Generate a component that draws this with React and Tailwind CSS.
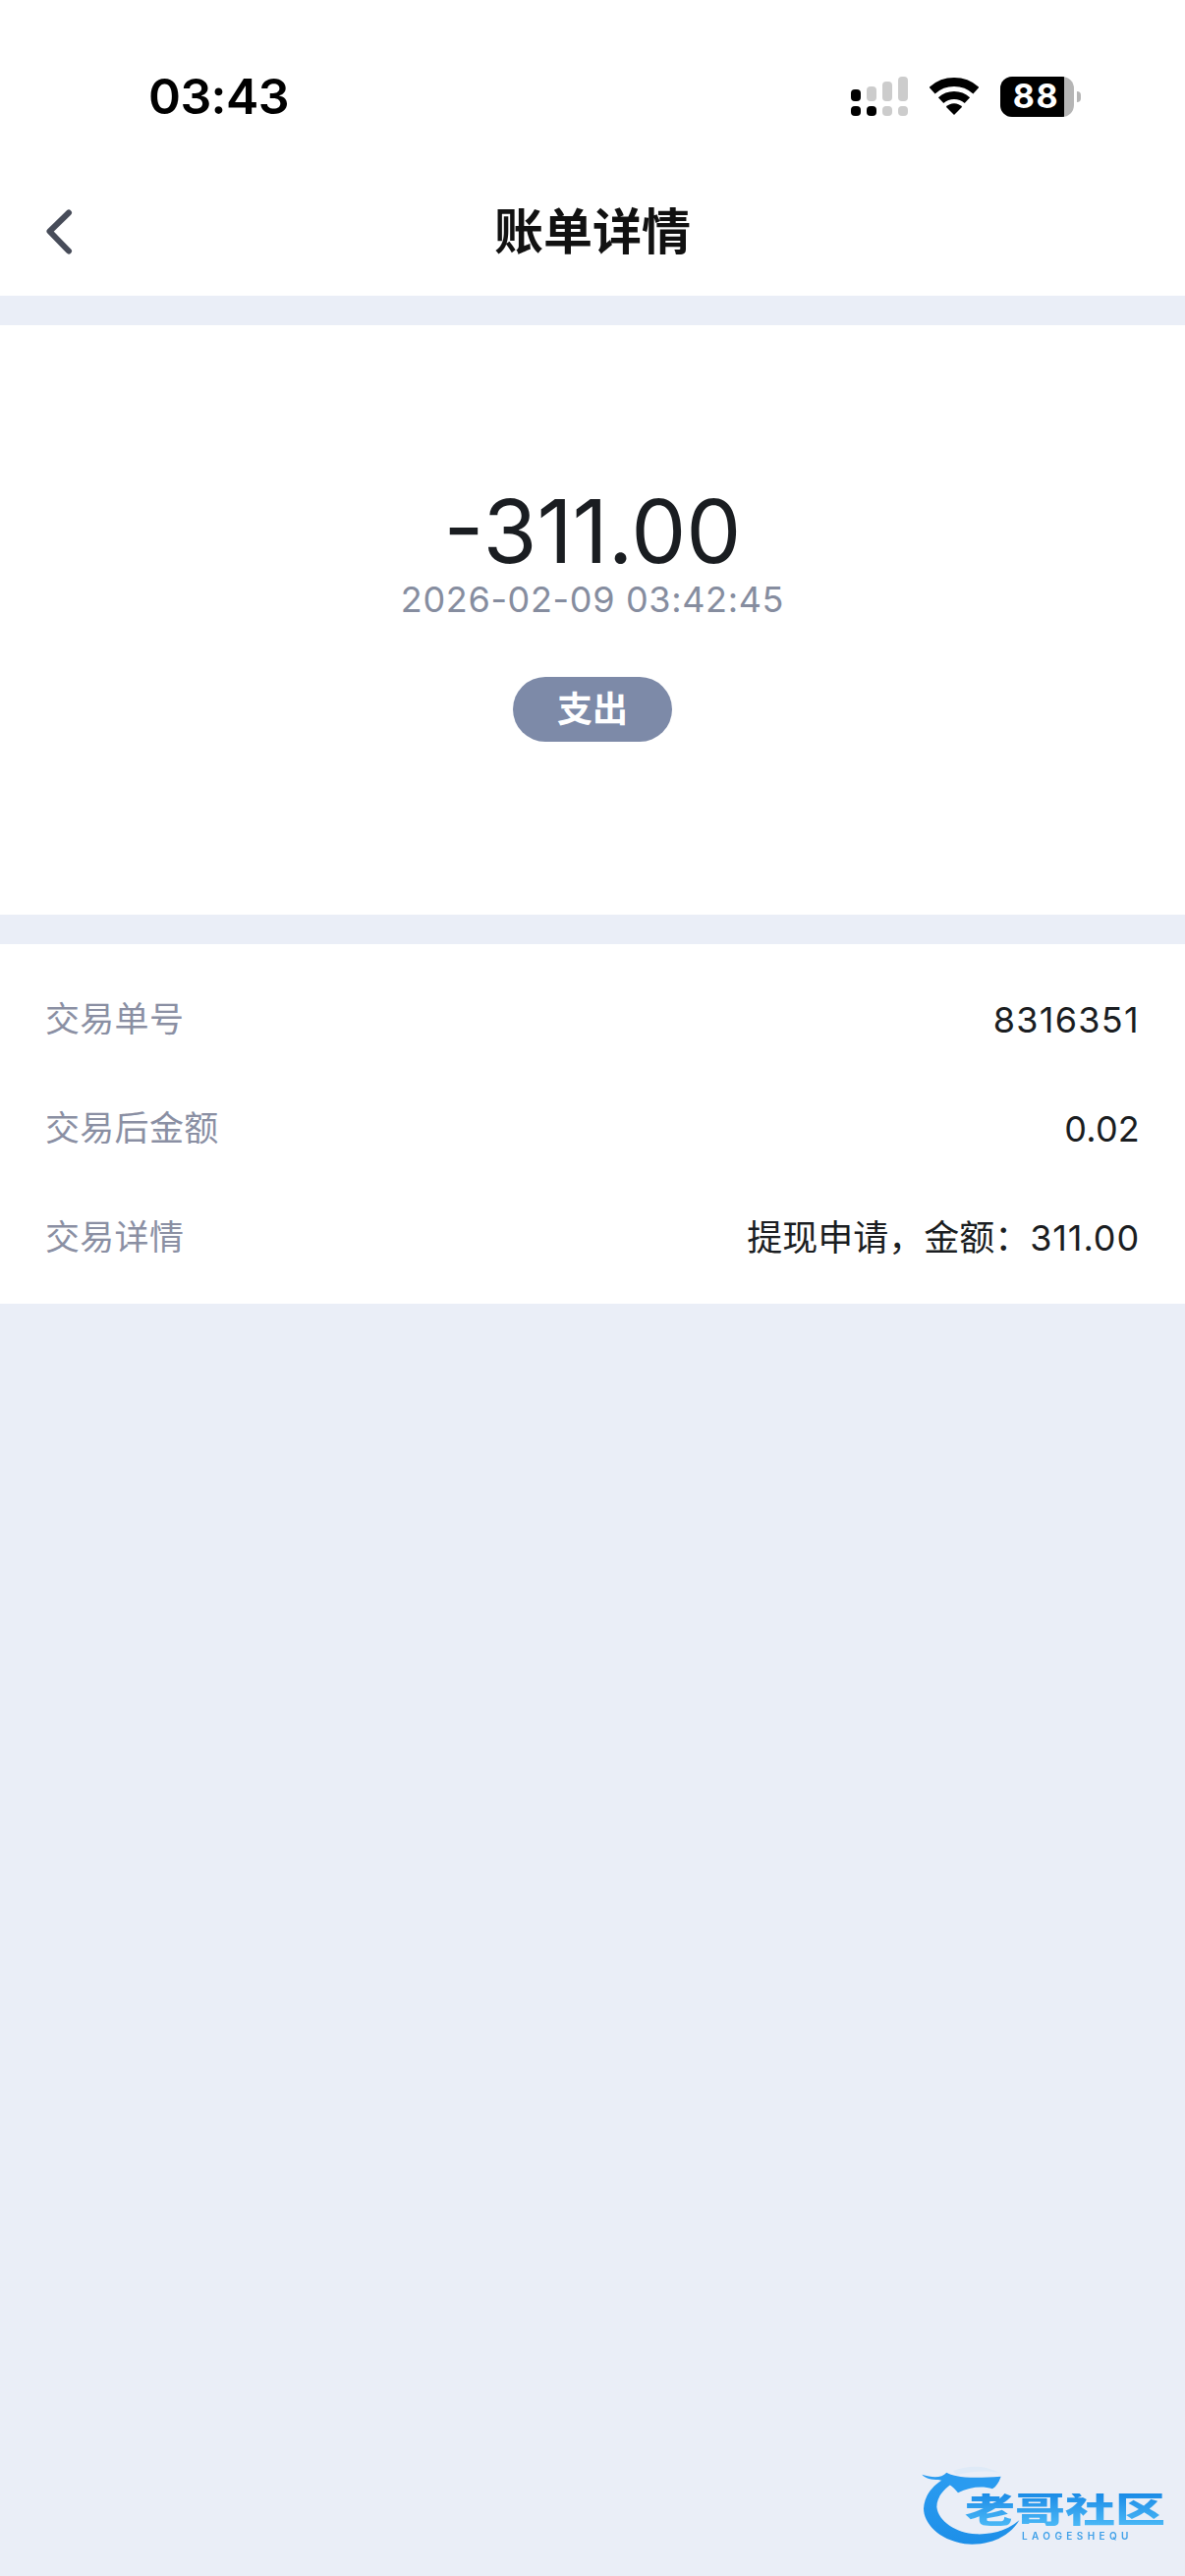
const font = { fontFamily: 'Inter, "Noto Sans CJK SC", sans-serif' };

const rows = [
  { label: "交易单号", value: "8316351", track: "tracking-[1.3px]" },
  { label: "交易后金额", value: "0.02", track: "tracking-[0.2px]" },
  { label: "交易详情", prefix: "提现申请，金额：", value: "311.00", track: "tracking-[0.9px]" },
];

function SignalIcon() {
  return (
    <svg width="58" height="40" viewBox="0 0 58 40" className="block">
      <rect x="0" y="13" width="10" height="12" rx="4" fill="#000" />
      <rect x="16" y="10" width="10" height="15" rx="4" fill="#ccc" />
      <rect x="32" y="5" width="10" height="20" rx="4" fill="#ccc" />
      <rect x="48" y="0" width="10" height="25" rx="4" fill="#ccc" />
      <rect x="0" y="30" width="10" height="10" rx="4" fill="#000" />
      <rect x="16" y="30" width="10" height="10" rx="4" fill="#000" />
      <rect x="32" y="30" width="10" height="10" rx="4" fill="#ccc" />
      <rect x="48" y="30" width="10" height="10" rx="4" fill="#ccc" />
    </svg>
  );
}

function WifiIcon() {
  return (
    <svg width="50" height="38" viewBox="0 0 50 38" fill="none" className="block">
      <path d="M2.6 13.1A33.5 33.5 0 0 1 47.4 13.1" stroke="#000" strokeWidth="9" />
      <path d="M11.6 23.1A20 20 0 0 1 38.4 23.1" stroke="#000" strokeWidth="8" />
      <path d="M25 38L16.8 29.8A11 11 0 0 1 33.2 29.8Z" fill="#000" />
    </svg>
  );
}

function Battery() {
  return (
    <div className="flex items-center gap-[3px]">
      <div className="flex h-[41px] w-[75px] overflow-hidden rounded-[12px] bg-[#b5b5b5]">
        <div className="flex w-[65px] items-center justify-center bg-black pl-[8px] text-[34px] font-bold leading-none tracking-[1.5px] text-white">
          88
        </div>
      </div>
      <div className="h-[11px] w-[4px] rounded-r-full bg-[#b5b5b5]" />
    </div>
  );
}

function Watermark() {
  return (
    <div className="absolute bottom-0 right-0 h-[122px] w-[286px] blur-[0.7px]">
      <svg width="286" height="122" viewBox="0 0 858 366" className="absolute inset-0">
        <defs>
          <linearGradient id="sw" x1="0" y1="0" x2="0" y2="1">
            <stop offset="0" stopColor="#2a9bf0" />
            <stop offset="1" stopColor="#1d8fe8" />
          </linearGradient>
        </defs>
        <path
          d="M118 72C85 92 62 122 60 160C60 205 105 255 185 268C255 275 320 250 352 196C318 226 270 240 220 238C160 234 105 200 100 155C100 125 122 100 150 82Z"
          fill="url(#sw)"
        />
        <path
          d="M55 56C85 66 115 68 130 50C150 62 190 70 296 62C290 80 282 92 270 100C240 90 200 94 165 112C150 92 130 78 105 72C85 72 65 68 55 56Z"
          fill="#2a9bf0"
        />
        <path d="M150 45C190 30 240 25 290 50C240 42 195 48 160 58Z" fill="#dfeaf7" />
      </svg>
      <div className="absolute left-[62px] top-[38px] h-[46px] origin-top scale-y-[0.72] whitespace-nowrap bg-gradient-to-b from-[#1a8be6] to-[#4ab8f6] bg-clip-text text-[51px] font-black leading-[46px] text-transparent">
        老哥社区
      </div>
      <div className="absolute left-[120px] top-[76px] whitespace-nowrap text-[10px] font-semibold leading-[10px] tracking-[4.4px] text-[#3d9fe8]">
        LAOGESHEQU
      </div>
    </div>
  );
}

export default function App() {
  return (
    <div style={font} className="relative flex min-h-screen flex-col bg-[#eaeef7]">
      <header className="bg-white pt-[50px]">
        <div className="flex h-[96px] items-center justify-between pl-[151px] pr-[106px]">
          <span className="text-[50px] font-semibold leading-none tracking-[-0.6px] text-black">03:43</span>
          <div className="flex items-center gap-[22px]">
            <SignalIcon />
            <WifiIcon />
            <Battery />
          </div>
        </div>
        <div className="mt-[25px] grid h-[130px] grid-cols-[1fr_auto_1fr] items-center">
          <div className="pl-[46px]">
            <svg width="28" height="46" viewBox="0 0 28 46" fill="none" className="block">
              <path
                d="M24 3.5L4.5 22.5L24 42.5"
                stroke="#474c59"
                strokeWidth="6"
                strokeLinecap="round"
                strokeLinejoin="round"
              />
            </svg>
          </div>
          <h1 className="text-[50px] font-semibold leading-none text-[#111]">账单详情</h1>
          <div />
        </div>
      </header>

      <section className="mt-[30px] flex h-[600px] flex-col items-center bg-white pt-[167px]">
        <div className="text-[89px] font-normal leading-[86px] text-[#1a1d21]">-311.00</div>
        <div className="mt-[6px] text-[36px] leading-[40px] tracking-[0.65px] text-[#868d9f]">
          2026-02-09 03:42:45
        </div>
        <div className="mt-[59px] flex h-[66px] w-[162px] items-center justify-center rounded-full bg-[#7d8aa8] text-[36px] font-semibold leading-none text-white">
          支出
        </div>
      </section>

      <section className="mt-[30px] flex h-[366px] flex-col bg-white px-[46px] pt-[21px]">
        {rows.map((row) => (
          <div key={row.label} className="flex h-[111px] items-center justify-between">
            <span className="text-[35px] leading-none tracking-[0.3px] text-[#8a8fa3]">{row.label}</span>
            <span className="text-[36px] leading-none text-[#1a1d21]">
              {row.prefix}
              <span className={row.track}>{row.value}</span>
            </span>
          </div>
        ))}
      </section>

      <Watermark />
    </div>
  );
}
